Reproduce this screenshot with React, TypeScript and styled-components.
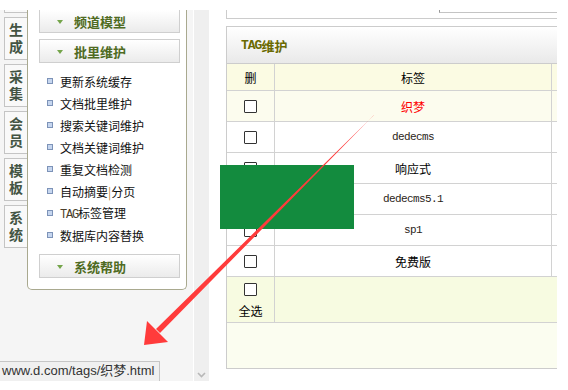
import React from 'react';
import styled, { createGlobalStyle } from 'styled-components';

const Global = createGlobalStyle`
  html, body { margin: 0; padding: 0; background: #fff; }
  body { font-family: "Noto Sans CJK SC", "Liberation Sans", sans-serif; font-size: 12px; color: #111; }
  * { box-sizing: border-box; }
`;

const Page = styled.div`
  position: relative;
  width: 568px;
  height: 390px;
  overflow: hidden;
  background: #fff;
  padding-top: 10px;
`;

const Frame = styled.div`
  position: relative;
  display: flex;
  height: 371px;
`;

const Sidebar = styled.div`
  width: 193px;
  flex: none;
  display: flex;
  background: #f5f5f5;
  overflow: hidden;
`;

const TabColumn = styled.div`
  width: 27px;
  flex: none;
  padding-left: 4px;
  display: flex;
  flex-direction: column;
  gap: 4px;
`;

const TabStub = styled.div`
  height: 3px;
  border-left: 1px solid #c4c4c4;
  border-bottom: 1px solid #c4c4c4;
  background: #f9f9f9;
`;

const Tab = styled.div`
  height: 43px;
  border: 1px solid #c4c4c4;
  border-right: none;
  background: #f9f9f9;
  display: flex;
  align-items: center;
  justify-content: center;
  padding-top: 3px;
`;

const TabLabel = styled.span`
  writing-mode: vertical-rl;
  letter-spacing: 3px;
  font-size: 14px;
  font-weight: bold;
  line-height: 18px;
  color: #435443;
`;

const MenuPanel = styled.div`
  width: 160px;
  flex: none;
  align-self: flex-start;
  background: #fff;
  border: 1px solid #a9a98f;
  border-top: none;
  border-radius: 0 0 5px 5px;
  padding: 0 6px 11px 11px;
`;

const MenuHeader = styled.div<{ $first?: boolean; $gap?: number }>`
  height: 24px;
  margin-top: ${(p) => (p.$first ? -1 : p.$gap ?? 0)}px;
  border: 1px solid #cfcfcf;
  background: linear-gradient(#ffffff, #ebebeb);
  display: flex;
  align-items: center;
  padding-left: 17px;
  gap: 11px;
  font-size: 13px;
  font-weight: bold;
  color: #4f6b22;
`;

const Arrow = styled.span`
  width: 0;
  height: 0;
  border-left: 3px solid transparent;
  border-right: 3px solid transparent;
  border-top: 4px solid #74a44a;
  margin-top: 1px;
`;

const MenuList = styled.ul`
  list-style: none;
  margin: 0;
  padding: 7px 0 8px 0;
`;

const MenuItem = styled.li`
  height: 22px;
  display: flex;
  align-items: center;
  padding-left: 8px;
  gap: 7px;
  font-size: 12px;
  color: #111;
  white-space: nowrap;
`;

const Bullet = styled.span`
  width: 6px;
  height: 6px;
  flex: none;
  border: 1px solid #7d93b8;
  background: #c6d6ef;
`;

const Latin = styled.span`
  font-family: "Liberation Mono", monospace;
  font-size: 12px;
  letter-spacing: -1.2px;
  color: #4a3e2a;
`;

const Scrollbar = styled.div`
  width: 16px;
  flex: none;
  background: #efefef;
  border-left: 1px solid #fff;
  display: flex;
  flex-direction: column;
  justify-content: flex-end;
  align-items: center;
  padding-bottom: 3px;
`;

const Main = styled.div`
  width: 348px;
  flex: none;
  overflow: hidden;
  padding-left: 17px;
  background: #fff;
`;

const TopBox = styled.div`
  width: 340px;
  height: 9px;
  border-left: 1px solid #ccc;
  border-bottom: 1px solid #ccc;
`;

const TopInput = styled.div`
  margin-left: 212px;
  height: 3px;
  border-left: 1px solid #999;
  border-bottom: 1px solid #c4c4c4;
`;

const TagBox = styled.div`
  width: 340px;
  margin-top: 7px;
  border: 1px solid #ccc;
  border-right: none;
  background: #fbfdf0;
`;

const TagHeader = styled.div`
  height: 37px;
  border-bottom: 1px solid #ccc;
  background: linear-gradient(#ffffff, #e9e9e9);
  display: flex;
  align-items: center;
  padding-left: 14px;
  font-size: 13px;
  font-weight: bold;
  color: #6a6a00;
`;

const HeadLatin = styled.span`
  font-family: "Liberation Mono", monospace;
  font-size: 13px;
  font-weight: bold;
  letter-spacing: -1px;
`;

const Row = styled.div<{ $h: number; $bg: string }>`
  display: flex;
  height: ${(p) => p.$h}px;
  border-bottom: 1px solid #d2d2d2;
  background: ${(p) => p.$bg};
`;

const CheckCell = styled.div`
  width: 48px;
  flex: none;
  border-right: 1px solid #d2d2d2;
  display: flex;
  flex-direction: column;
  align-items: center;
  justify-content: center;
  font-size: 12px;
  color: #000;
`;

const LabelCell = styled.div<{ $color?: string }>`
  width: 277px;
  flex: none;
  border-right: 1px solid #d2d2d2;
  display: flex;
  align-items: center;
  justify-content: center;
  font-size: 12px;
  color: ${(p) => p.$color ?? '#000'};
`;

const MonoText = styled.span`
  font-family: "Liberation Mono", monospace;
  font-size: 11px;
  letter-spacing: -0.6px;
  color: #2a2418;
`;

const ExtraCell = styled.div`
  flex: 1;
`;

const SelectAllCell = styled(CheckCell)`
  justify-content: flex-start;
  padding-top: 6px;
  gap: 7px;
  line-height: 16px;
`;

const Check = styled.input.attrs({ type: 'checkbox' })`
  appearance: none;
  -webkit-appearance: none;
  width: 13px;
  height: 13px;
  margin: 0;
  border: 1px solid #333;
  border-radius: 1px;
  background: #fff;
`;

const BottomArea = styled.div`
  height: 45px;
`;

const StatusBar = styled.div`
  position: absolute;
  left: 0;
  bottom: 0;
  width: 160px;
  height: 20px;
  border-top: 1px solid #c6c6c6;
  border-right: 1px solid #c6c6c6;
  background: #f0f0f0;
  padding-left: 2px;
  font-family: "Liberation Sans", "Noto Sans CJK SC", sans-serif;
  font-size: 13px;
  line-height: 18px;
  color: #333;
  white-space: nowrap;
`;

const GreenBlock = styled.div`
  position: absolute;
  left: 220px;
  top: 165px;
  width: 134px;
  height: 64px;
  background: #138b3e;
`;

const Overlay = styled.svg`
  position: absolute;
  left: 0;
  top: 0;
  pointer-events: none;
`;

const menuItems: React.ReactNode[] = [
  '更新系统缓存',
  '文档批里维护',
  '搜索关键词维护',
  '文档关键词维护',
  '重复文档检测',
  <>自动摘要<span style={{ color: '#c08a40' }}>|</span>分页</>,
  <><Latin>TAG</Latin>标签管理</>,
  '数据库内容替换',
];

type TagRow = { label: React.ReactNode; color?: string; bg: string };
const rows: TagRow[] = [
  { label: '织梦', color: '#ff0000', bg: '#fcfcee' },
  { label: <MonoText>dedecms</MonoText>, bg: '#fff' },
  { label: '响应式', bg: '#fff' },
  { label: <MonoText>dedecms5.1</MonoText>, bg: '#fff' },
  { label: <MonoText>sp1</MonoText>, bg: '#fff' },
  { label: '免费版', bg: '#fff' },
];

export default function App() {
  return (
    <Page>
      <Global />
      <Frame>
        <Sidebar>
          <TabColumn>
            <TabStub />
            {['生成', '采集', '会员', '模板', '系统'].map((t) => (
              <Tab key={t}>
                <TabLabel>{t}</TabLabel>
              </Tab>
            ))}
          </TabColumn>
          <MenuPanel>
            <MenuHeader $first>
              <Arrow />
              频道模型
            </MenuHeader>
            <MenuHeader $gap={6}>
              <Arrow />
              批里维护
            </MenuHeader>
            <MenuList>
              {menuItems.map((m, i) => (
                <MenuItem key={i}>
                  <Bullet />
                  <span>{m}</span>
                </MenuItem>
              ))}
            </MenuList>
            <MenuHeader>
              <Arrow />
              系统帮助
            </MenuHeader>
          </MenuPanel>
        </Sidebar>
        <Scrollbar>
          <svg width="9" height="6" viewBox="0 0 9 6">
            <path d="M1 1 L4.5 4.5 L8 1" fill="none" stroke="#b8b8b8" strokeWidth="1.6" />
          </svg>
        </Scrollbar>
        <Main>
          <TopBox>
            <TopInput />
          </TopBox>
          <TagBox>
            <TagHeader>
              <HeadLatin>TAG</HeadLatin>维护
            </TagHeader>
            <Row $h={27} $bg="#fbfbe3">
              <CheckCell>删</CheckCell>
              <LabelCell>标签</LabelCell>
              <ExtraCell />
            </Row>
            {rows.map((r, i) => (
              <Row key={i} $h={31} $bg={r.bg}>
                <CheckCell>
                  <Check />
                </CheckCell>
                <LabelCell $color={r.color}>{r.label}</LabelCell>
                <ExtraCell />
              </Row>
            ))}
            <Row $h={46} $bg="#f7fbe1">
              <SelectAllCell>
                <Check />
                <span>全选</span>
              </SelectAllCell>
              <ExtraCell />
            </Row>
            <BottomArea />
          </TagBox>
        </Main>
        <StatusBar>www.d.com/tags/织梦.html</StatusBar>
      </Frame>
      <GreenBlock />
      <Overlay width="568" height="390" viewBox="0 0 568 390">
        <polygon points="374.4,114.6 373.6,115.4 156,329 160,333" fill="#ff3b3b" />
        <polygon points="144,345 147,321 168,342" fill="#ff3b3b" />
      </Overlay>
    </Page>
  );
}
